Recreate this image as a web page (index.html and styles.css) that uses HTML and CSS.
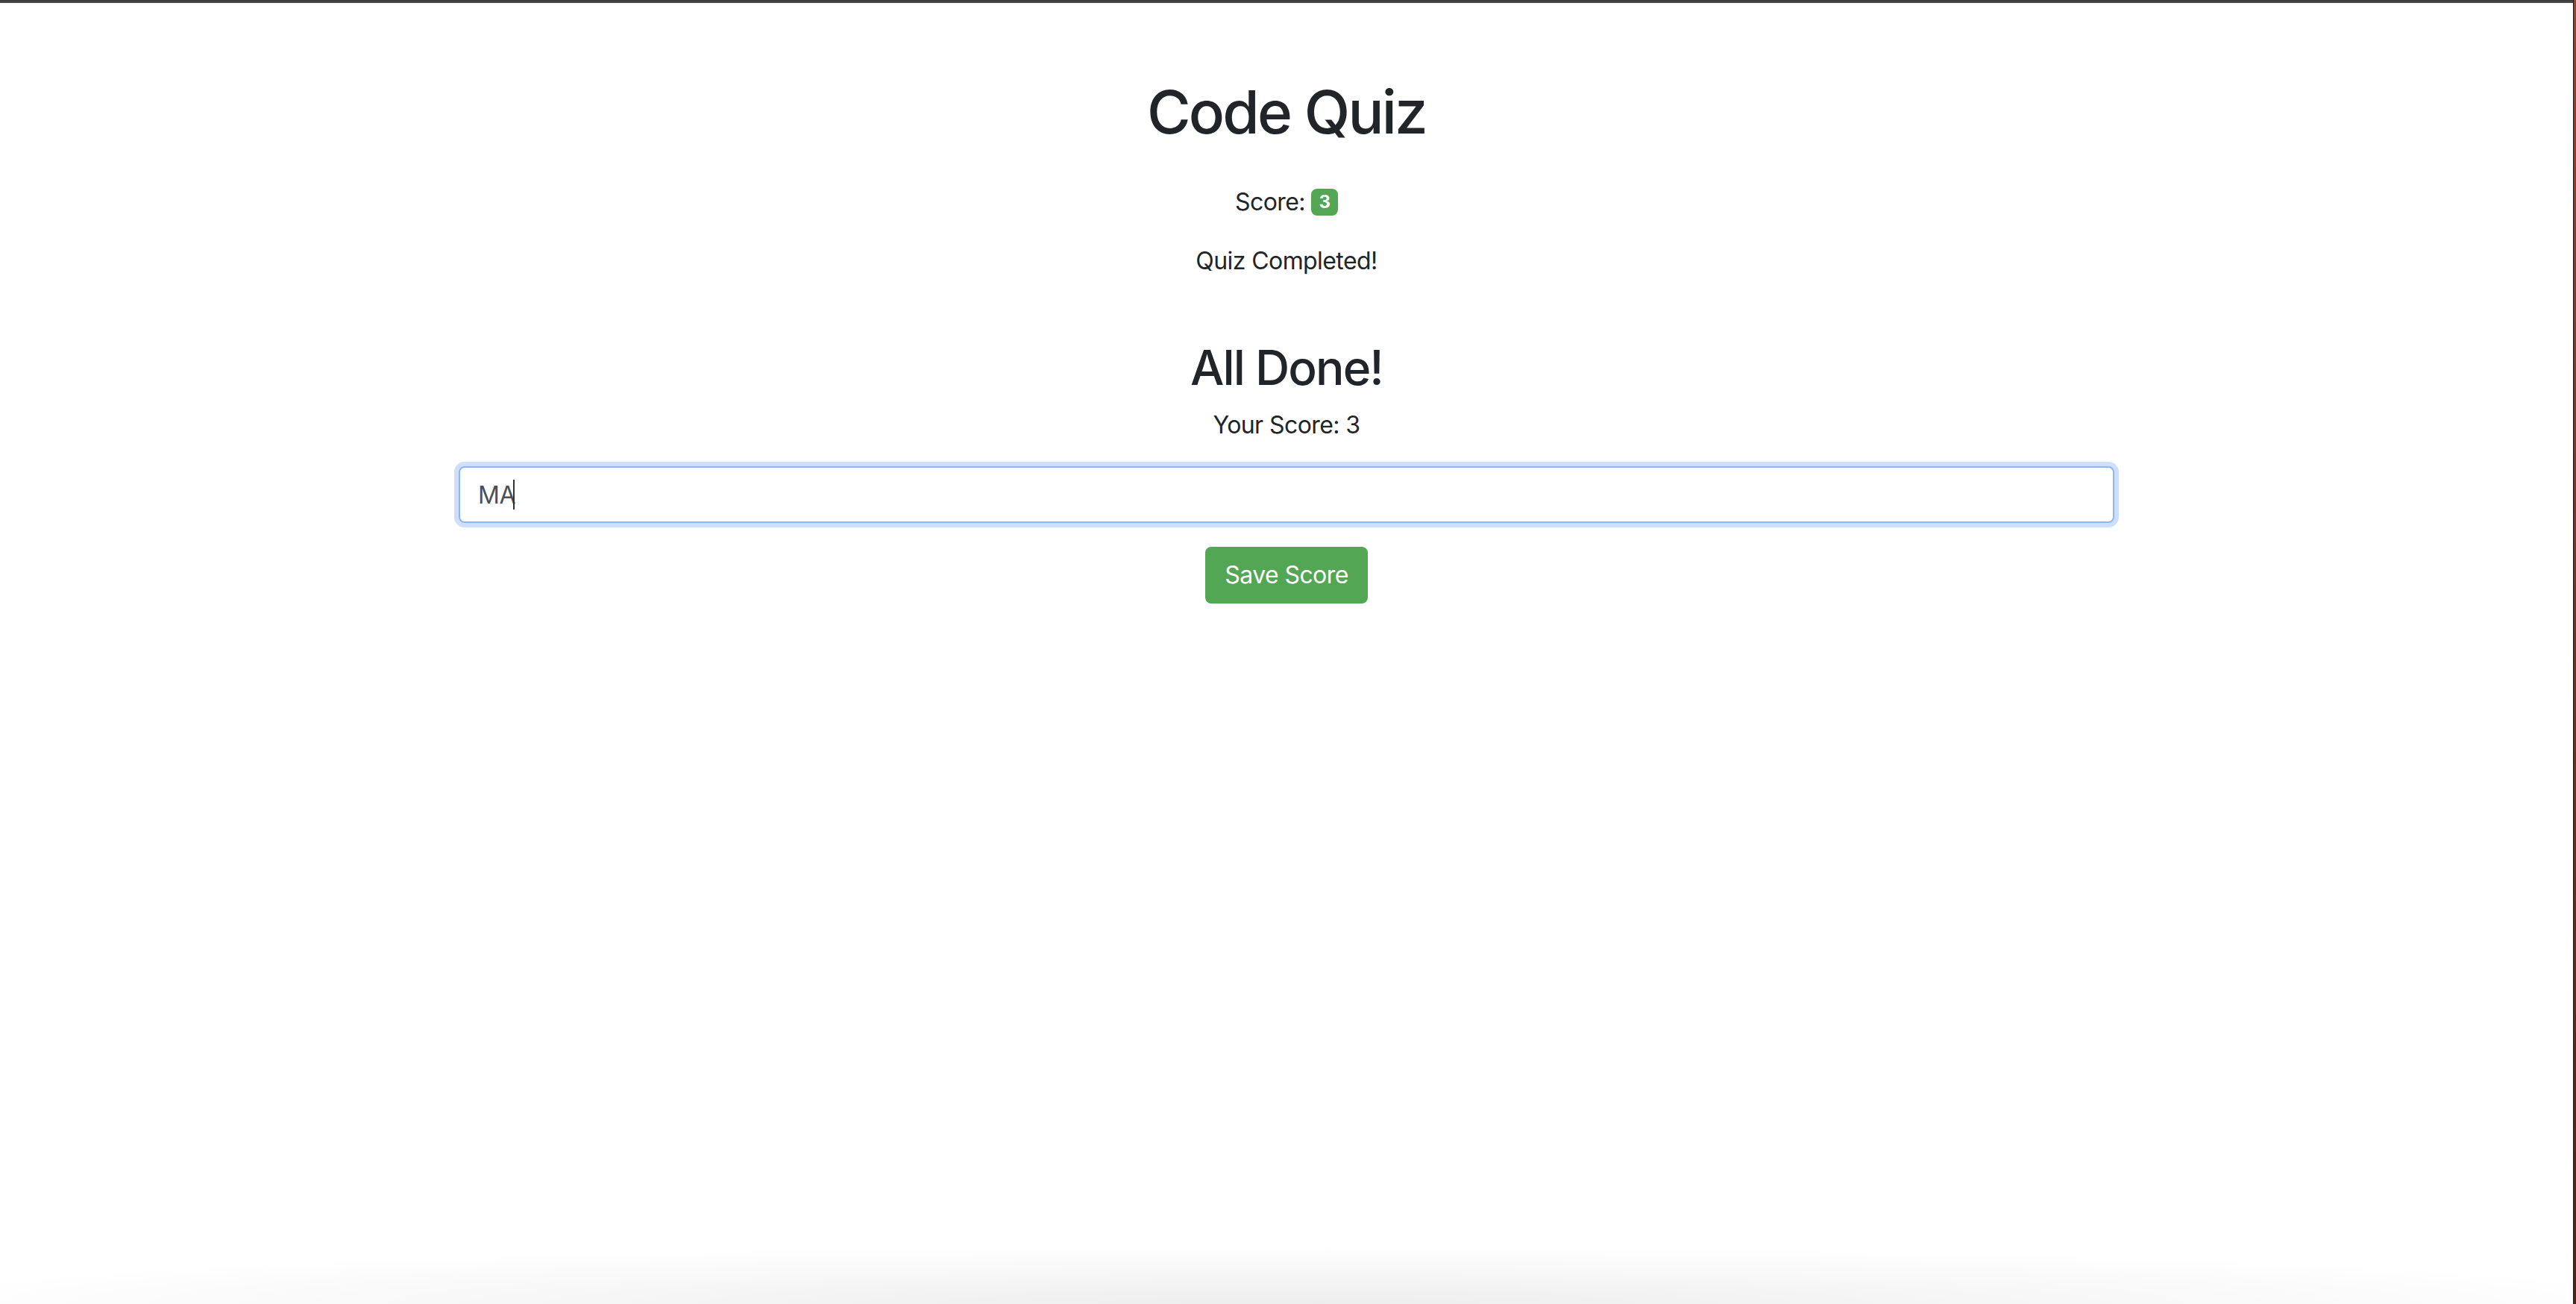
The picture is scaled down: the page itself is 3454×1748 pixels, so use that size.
FILE: index.html
```html
<!DOCTYPE html>
<html lang="en">
<head>
<meta charset="utf-8">
<title>Code Quiz</title>
<link rel="stylesheet" href="styles.css">
</head>
<body>
<div class="frame">
  <div class="page">
    <div class="topbar"></div>
    <main class="container">
      <h1 class="title">Code Quiz</h1>
      <p class="score">Score: <span class="badge">3</span></p>
      <p class="status">Quiz Completed!</p>
      <section class="done">
        <h2 class="done-title">All Done!</h2>
        <p class="final">Your Score: 3</p>
        <div class="field">
          <input class="initials" type="text" value="MA" aria-label="Initials">
          <span class="caret"></span>
        </div>
        <button class="btn-save" type="button">Save Score</button>
      </section>
    </main>
    <div class="shadow"></div>
  </div>
  <div class="edge"></div>
</div>
</body>
</html>
```
FILE: styles.css
```css
html, body {
  margin: 0;
  padding: 0;
  height: 100%;
}
body {
  font-family: Inter, "Liberation Sans", Arial, sans-serif;
  color: #212529;
  background: #fff;
  font-size: 32px;
  line-height: 1.5;
  letter-spacing: -0.018em;
}
.frame {
  display: flex;
  height: 100vh;
  overflow: hidden;
}
.page {
  flex: 1;
  position: relative;
  background: #fff;
}
.topbar {
  height: 4px;
  background: linear-gradient(#3a3a3a, #4a4a4a);
}
.edge {
  width: 3px;
  border-left: 1px solid #1a1a1a;
  background: linear-gradient(#9a4222, #7a2e1a 50%, #5e1d13);
}
.container {
  max-width: 2220px;
  margin: 0 auto;
  padding: 98px 30px 0;
  text-align: center;
}
.title {
  margin: 0 0 49px;
  font-size: 80px;
  font-weight: 500;
  line-height: 96px;
  letter-spacing: -0.035em;
}
.score {
  margin: 0 0 31px;
}
.badge {
  display: inline-block;
  font-size: 24px;
  font-weight: 700;
  line-height: 1;
  padding: 6px 10px;
  border-radius: 8px;
  background: #53a653;
  color: #fff;
  letter-spacing: 0;
  vertical-align: 3px;
}
.status {
  margin: 0;
}
.done {
  margin-top: 81px;
}
.done-title {
  margin: 0 0 15px;
  font-size: 64px;
  font-weight: 500;
  line-height: 76px;
  letter-spacing: -0.03em;
}
.final {
  margin: 0 0 31px;
}
.field {
  position: relative;
  margin-bottom: 32px;
}
.initials {
  display: block;
  box-sizing: border-box;
  width: 100%;
  height: 76px;
  padding: 12px 24px;
  font-family: inherit;
  font-size: 32px;
  line-height: 48px;
  letter-spacing: -0.01em;
  color: #495057;
  background: #fff;
  border: 2px solid #8ab8f6;
  border-radius: 8px;
  box-shadow: 0 0 0 6px #cfdffb;
  outline: none;
  text-align: left;
}
.caret {
  position: absolute;
  left: 73px;
  top: 18px;
  width: 2px;
  height: 40px;
  background: #333;
}
.btn-save {
  display: inline-block;
  height: 76px;
  padding: 12px 24px;
  font-family: inherit;
  font-size: 32px;
  line-height: 48px;
  letter-spacing: -0.018em;
  color: #fff;
  background: #53a653;
  border: 2px solid #53a653;
  border-radius: 8px;
  cursor: pointer;
}
.shadow {
  position: absolute;
  left: 0;
  right: 0;
  bottom: 0;
  height: 80px;
  background: radial-gradient(ellipse 55% 100% at 50% 100%, rgba(0,0,0,0.07), rgba(0,0,0,0) 100%);
  pointer-events: none;
}
```
